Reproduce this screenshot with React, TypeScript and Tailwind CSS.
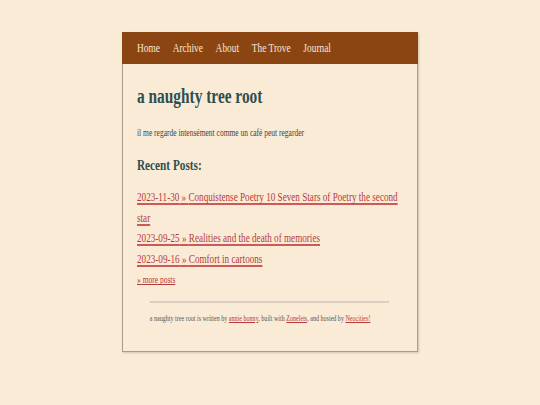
import React from 'react';

const posts = [
  { date: '2023-11-30', title: 'Conquistense Poetry 10 Seven Stars of Poetry the second star' },
  { date: '2023-09-25', title: 'Realities and the death of memories' },
  { date: '2023-09-16', title: 'Comfort in cartoons' },
];

const navItems = ['Home', 'Archive', 'About', 'The Trove', 'Journal'];

// the original face is a narrow serif; squeeze Liberation Serif to match
const narrow = 'w-[353px] origin-left scale-x-[0.75]';

export default function App() {
  return (
    <div
      className="min-h-[405px] w-full bg-[#faebd7] pt-[32px]"
      style={{ fontFamily: '"Liberation Serif", "Times New Roman", serif' }}
    >
      <div className="mx-auto w-[296px] border border-[#ab9a8a] bg-[#faebd7] shadow-[1px_1px_2px_rgba(0,0,0,0.18)]">
        <nav className="-mx-px -mt-px flex h-[32px] items-center bg-[#8b4513] px-[15px]">
          <div className={`flex gap-[17px] ${narrow}`}>
            {navItems.map(item => (
              <a key={item} className="text-[12.5px] leading-[15px] text-[#f8e6d0]">
                {item}
              </a>
            ))}
          </div>
        </nav>

        <main className="px-[14px] pb-[27px]">
          <div className={narrow}>
            <h1 className="mt-[20px] text-[20.5px] font-bold leading-[24px] text-[#2f4f4f]">
              a naughty tree root
            </h1>
            <p className="mt-[19px] text-[10px] leading-[12px] text-[#444]">
              il me regarde intensément comme un café peut regarder
            </p>

            <h2 className="mt-[17px] text-[15px] font-bold leading-[18px] text-[#2f4f4f]">
              Recent Posts:
            </h2>
            <ul className="mt-[13px]">
              {posts.map(post => (
                <li key={post.date} className="text-[12.2px] leading-[20.5px]">
                  <a className="text-[#b83a3a] underline decoration-[#cc5a5a] decoration-[1.5px] underline-offset-[1.5px] [text-decoration-skip-ink:none]">
                    {post.date} » {post.title}
                  </a>
                </li>
              ))}
            </ul>
            <a className="mt-[5px] block text-[10px] leading-[12px] text-[#b83a3a] underline [text-decoration-skip-ink:none]">
              » more posts
            </a>

            <footer className="mt-[15px] px-[17px]">
              <div className="h-[2px] bg-[#d8cec2]" />
              <p className="mt-[11px] text-[8.1px] leading-[10px] text-[#555]">
                a naughty tree root is written by{' '}
                <a className="text-[#b83a3a] underline">annie bonny</a>, built with{' '}
                <a className="text-[#b83a3a] underline">Zonelets</a>, and hosted by{' '}
                <a className="text-[#b83a3a] underline">Neocities!</a>
              </p>
            </footer>
          </div>
        </main>
      </div>
    </div>
  );
}
